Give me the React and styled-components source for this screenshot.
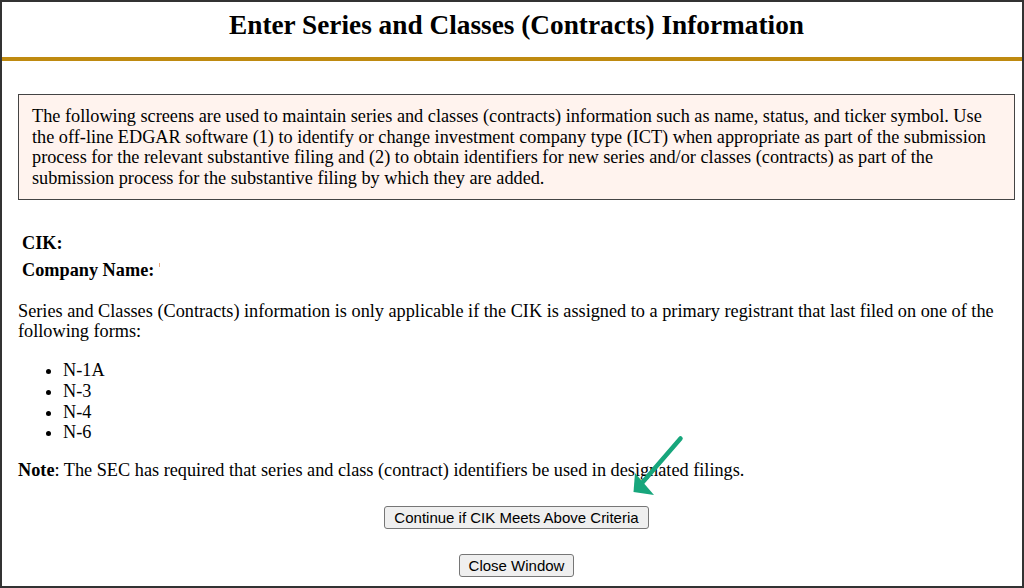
import React from "react";
import styled, { createGlobalStyle } from "styled-components";

const GlobalStyle = createGlobalStyle`
    html, body {
        margin: 0;
        padding: 0;
        background: #ffffff;
    }
    body {
        font-family: "Liberation Serif", "Times New Roman", serif;
        font-size: 18.25px;
        color: #000;
    }
`;

const Frame = styled.div`
    position: relative;
    box-sizing: border-box;
    width: 1024px;
    height: 588px;
    border: 2px solid #333;
    overflow: hidden;
    background: #fff;
`;

const Page = styled.div`
    width: 1029px;
`;

const Header = styled.div`
    padding: 8px 0 16px;
    border-bottom: 4px solid #bf8a10;
    text-align: center;
`;

const Title = styled.h1`
    margin: 0;
    font-size: 27.3px;
    font-weight: bold;
    line-height: 31px;
`;

const Content = styled.div`
    padding: 0 16px;
    line-height: 20.7px;
`;

const InfoBox = styled.div`
    margin-top: 33px;
    padding: 11px 13px 10px;
    border: 1px solid #444;
    background: #fff3ee;
`;

const InfoTable = styled.table`
    margin-top: 29px;
    border-spacing: 2px;
    font-size: 18.25px;
    td {
        padding: 2px;
        line-height: 20.7px;
    }
`;

const Label = styled.td`
    font-weight: bold;
`;

const Redacted = styled.span`
    display: inline-block;
    width: 1px;
    height: 4px;
    margin-left: 5px;
    vertical-align: 9px;
    background: #f3a877;
`;

const Paragraph = styled.p`
    margin: ${props => props.top}px 0 0;
`;

const FormList = styled.ul`
    margin: 18px 0 0;
    padding-left: 45px;
`;

const ButtonRow = styled.div`
    margin-top: ${props => props.top}px;
    text-align: center;
`;

const Button = styled.button`
    height: 23px;
    padding: 0 9px;
    font-family: "Liberation Sans", Arial, sans-serif;
    font-size: 15px;
    color: #000;
    background: #efefef;
    border: 1px solid #767676;
    border-radius: 3px;
    cursor: pointer;
    &:hover {
        background: #e5e5e5;
    }
`;

const Arrow = styled.svg`
    position: absolute;
    left: 620px;
    top: 425px;
    pointer-events: none;
`;

const forms = ["N-1A", "N-3", "N-4", "N-6"];

export default function App() {
    return (
        <>
            <GlobalStyle />
            <Frame>
                <Page>
                    <Header>
                        <Title>Enter Series and Classes (Contracts) Information</Title>
                    </Header>
                    <Content>
                        <InfoBox>
                            The following screens are used to maintain series and classes
                            (contracts) information such as name, status, and ticker symbol.
                            Use the off-line EDGAR software (1) to identify or change
                            investment company type (ICT) when appropriate as part of the
                            submission process for the relevant substantive filing and (2) to
                            obtain identifiers for new series and/or classes (contracts) as
                            part of the submission process for the substantive filing by which
                            they are added.
                        </InfoBox>
                        <InfoTable>
                            <tbody>
                                <tr>
                                    <Label>CIK:</Label>
                                </tr>
                                <tr>
                                    <Label>
                                        Company Name:<Redacted />
                                    </Label>
                                </tr>
                            </tbody>
                        </InfoTable>
                        <Paragraph top={16.5}>
                            Series and Classes (Contracts) information is only applicable if
                            the CIK is assigned to a primary registrant that last filed on one
                            of the following forms:
                        </Paragraph>
                        <FormList>
                            {forms.map(f => (
                                <li key={f}>{f}</li>
                            ))}
                        </FormList>
                        <Paragraph top={16.6}>
                            <b>Note</b>: The SEC has required that series and class (contract)
                            identifiers be used in designated filings.
                        </Paragraph>
                        <ButtonRow top={25.7}>
                            <Button>Continue if CIK Meets Above Criteria</Button>
                        </ButtonRow>
                        <ButtonRow top={25}>
                            <Button>Close Window</Button>
                        </ButtonRow>
                    </Content>
                </Page>
                {/* annotation arrow pointing at the continue button */}
                <Arrow width="80" height="80" viewBox="0 0 80 80">
                    <line
                        x1="58.5"
                        y1="11.5"
                        x2="20"
                        y2="56"
                        stroke="#17a67c"
                        strokeWidth="4.5"
                        strokeLinecap="round"
                    />
                    <polygon points="11.5,65 13,46 32,68" fill="#17a67c" />
                </Arrow>
            </Frame>
        </>
    );
}
